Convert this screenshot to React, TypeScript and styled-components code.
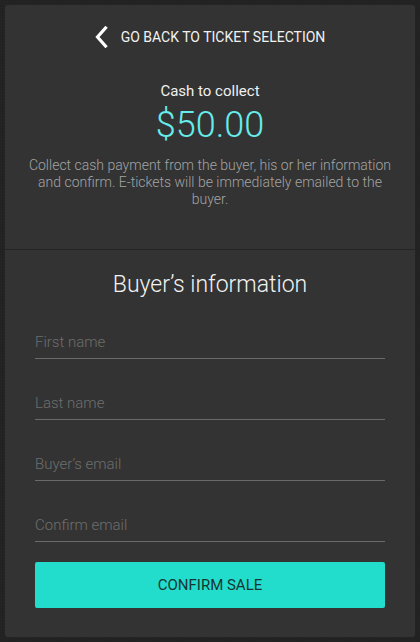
import React from "react";
import styled, { createGlobalStyle } from "styled-components";

const Global = createGlobalStyle`
  html, body { margin: 0; padding: 0; }
  body {
    background-color: #222222;
    background-image: radial-gradient(rgba(255,255,255,0.025) 1px, transparent 1px);
    background-size: 3px 3px;
    font-family: Roboto, "Liberation Sans", sans-serif;
    min-height: 642px;
  }
  * { box-sizing: border-box; }
`;

const Page = styled.div`
  padding: 5px;
  height: 642px;
`;

const Card = styled.div`
  background: #333333;
  border-radius: 3px;
  height: 632px;
  display: flex;
  flex-direction: column;
`;

const Header = styled.div`
  display: flex;
  flex-direction: column;
  align-items: center;
  padding: 21px 14px 0;
  height: 245px;
  border-bottom: 1px solid #242424;
`;

const BackLink = styled.a`
  display: flex;
  align-items: center;
  gap: 13px;
  color: #f2f2f2;
  font-size: 14px;
  text-decoration: none;
  text-transform: uppercase;
  cursor: pointer;
  height: 21px;
`;

const CashLabel = styled.div`
  margin-top: 35px;
  color: #f0f0f0;
  font-size: 15px;
  line-height: 18px;
`;

const Amount = styled.div`
  color: #66ecea;
  font-size: 36px;
  font-weight: 300;
  line-height: 40px;
  margin-top: 5px;
`;

const Description = styled.p`
  margin: 12px 0 0;
  color: #a4a4a4;
  font-size: 14px;
  font-weight: 300;
  line-height: 17px;
  text-align: center;
`;

const Form = styled.form`
  display: flex;
  flex-direction: column;
  padding: 21px 30px 0;
`;

const Title = styled.h2`
  margin: 0;
  color: #f2f2f2;
  font-size: 23px;
  font-weight: 300;
  line-height: 28px;
  text-align: center;
`;

const Input = styled.input`
  margin-top: 20px;
  height: 41px;
  padding: 8px 0 0;
  border: none;
  border-bottom: 1px solid #6a6a6a;
  background: transparent;
  color: #eee;
  font-family: inherit;
  font-size: 15px;
  font-weight: 300;
  outline: none;
  &::placeholder { color: #6e6e6e; }
  &:first-of-type { margin-top: 19px; }
`;

const ConfirmButton = styled.button`
  margin-top: 20px;
  height: 46px;
  border: none;
  border-radius: 2px;
  background: #22ddcc;
  color: #173533;
  font-family: inherit;
  font-size: 15px;
  font-weight: 400;
  text-transform: uppercase;
  cursor: pointer;
`;

const BackIcon = () => (
  <svg width="13" height="22" viewBox="0 0 13 22" fill="none">
    <polyline points="10.5,2 2.5,11 10.5,20" stroke="#ffffff" strokeWidth="3.2" strokeLinecap="square" strokeLinejoin="miter" />
  </svg>
);

export default function App() {
  return (
    <>
      <Global />
      <Page>
        <Card>
          <Header>
            <BackLink>
              <BackIcon />
              Go back to ticket selection
            </BackLink>
            <CashLabel>Cash to collect</CashLabel>
            <Amount>$50.00</Amount>
            <Description>
              Collect cash payment from the buyer, his or her information and confirm. E-tickets will be immediately emailed to the buyer.
            </Description>
          </Header>
          <Form onSubmit={(e) => e.preventDefault()}>
            <Title>Buyer’s information</Title>
            <Input placeholder="First name" />
            <Input placeholder="Last name" />
            <Input placeholder="Buyer’s email" />
            <Input placeholder="Confirm email" />
            <ConfirmButton type="submit">Confirm sale</ConfirmButton>
          </Form>
        </Card>
      </Page>
    </>
  );
}
